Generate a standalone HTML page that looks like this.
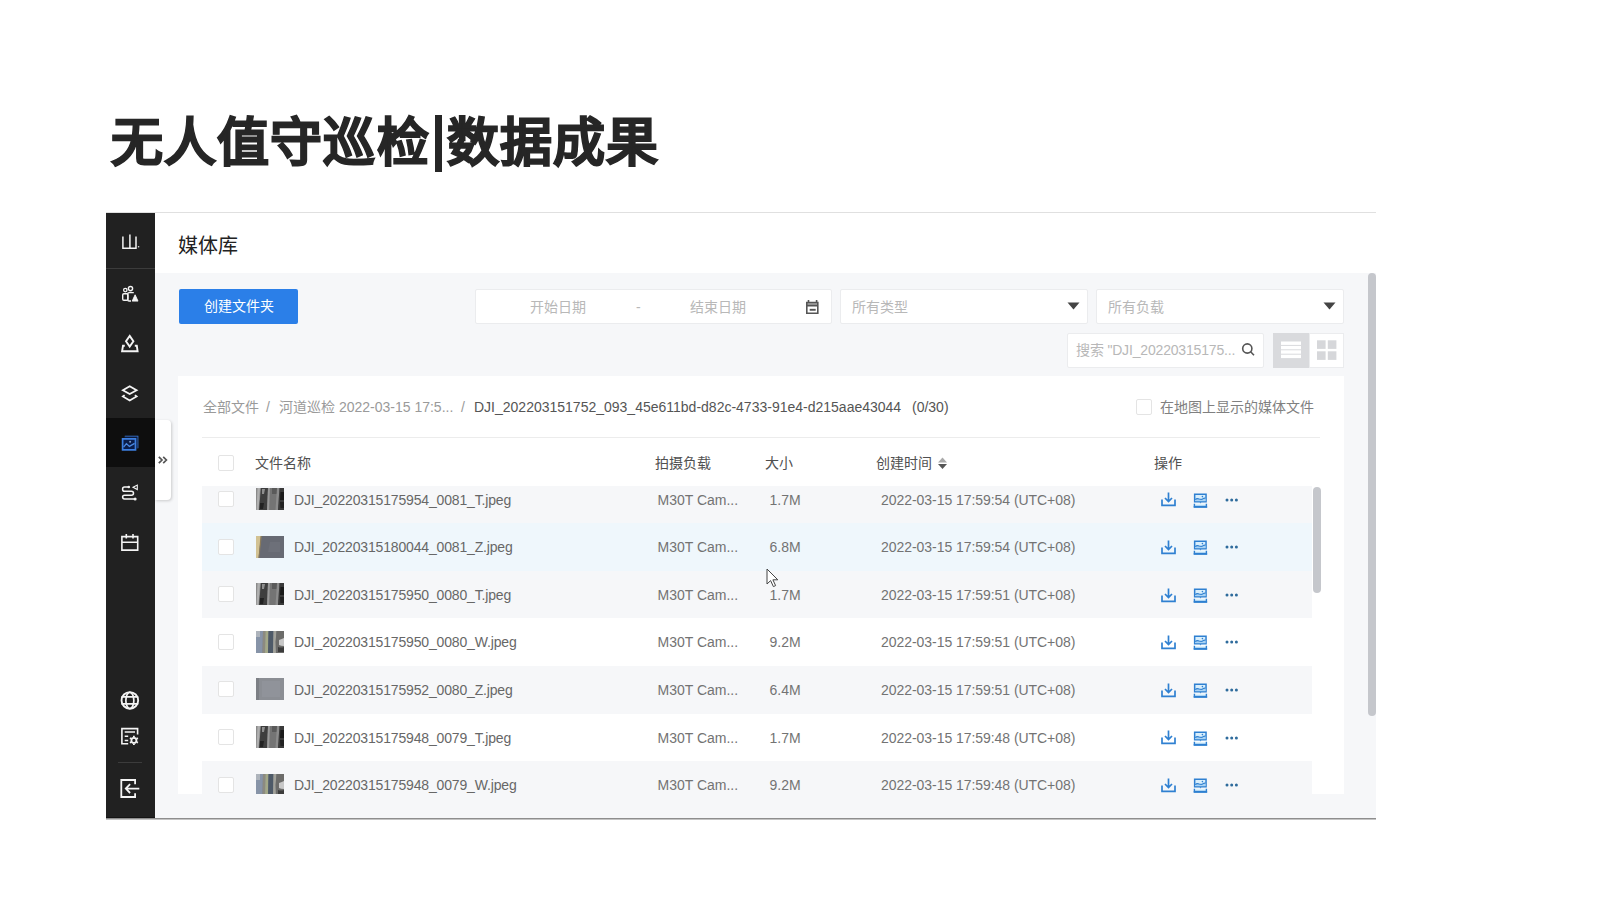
<!DOCTYPE html>
<html lang="zh-CN">
<head>
<meta charset="utf-8">
<style>
*{box-sizing:border-box;margin:0;padding:0}
html,body{width:1600px;height:900px;overflow:hidden;background:#fff;font-family:"Liberation Sans",sans-serif}
.a{position:absolute;white-space:nowrap}
.t14{font-size:14px;line-height:16px}
.c6{color:#737373}
.fn{color:#676767}
.ph{color:#b8b8b8}
.box{position:absolute;background:#fff;border:1px solid #ebecee;border-radius:2px}
.cb{position:absolute;width:16px;height:16px;border:1px solid #e4e4e4;border-radius:2px;background:#fff}
svg.a{overflow:visible}
</style>
</head>
<body>
<div class="a" style="left:111.3px;top:106.5px;font-size:52px;font-weight:bold;line-height:72px;color:#262626;-webkit-text-stroke:1.4px #262626;letter-spacing:1.05px">无人值守巡检</div>
<div class="a" style="left:435px;top:115px;width:6.5px;height:57px;background:#262626"></div>
<div class="a" style="left:447.3px;top:106.5px;font-size:52px;font-weight:bold;line-height:72px;color:#262626;-webkit-text-stroke:1.4px #262626;letter-spacing:1.05px">数据成果</div>
<div class="a" style="left:106px;top:212px;width:1270px;height:1px;background:#e0e0e0"></div>
<!-- sidebar -->
<div class="a" style="left:106px;top:213px;width:49px;height:605px;background:#212121"></div>
<div class="a" style="left:106px;top:268px;width:49px;height:1px;background:#3c3c3c"></div>
<div class="a" style="left:106px;top:418px;width:49px;height:49px;background:#0e0e0e"></div>
<div class="a" style="left:118px;top:762px;width:24px;height:1px;background:#3c3c3c"></div>
<svg class="a" style="left:106px;top:213px" width="49" height="605" viewBox="106 213 49 605" fill="none" stroke="#f4f4f4" stroke-width="1.6">
 <path d="M122.9 236.5V248.2H136V236.5M129.9 234.5V248.2" stroke-width="1.5"/><circle cx="138.6" cy="246.8" r="0.8" fill="#ddd" stroke="none"/>
 <circle cx="125.3" cy="290.1" r="1.7" stroke-width="1.3"/><circle cx="130.5" cy="288.6" r="2.1" stroke-width="1.4"/>
 <rect x="122.7" y="293.7" width="5.2" height="6.6" rx="1.2" stroke-width="1.4"/>
 <path d="M133.8 292.6H129Q127.8 292.6 127.8 293.8V299.8Q127.8 301 129 301H131" stroke-width="1.4"/>
 <path d="M135.1 294.8L138 301.1H132.2Z" fill="#f4f4f4" stroke-width="0.9"/>
 <path d="M129.7 335.9L133.4 341.3L129.7 346.6L126 341.3Z" stroke-width="1.9"/><path d="M124.8 345.8H123L122.1 351.2H137.6L136.8 345.8H134.8" stroke-width="1.9"/>
 <path d="M129.7 386.2L136.6 390.2L129.7 394L122.9 390.2Z" stroke-width="1.8"/><path d="M124.6 395.1L122.9 396.4L129.7 400.5L136.6 396.4L134.9 395.1" stroke-width="1.8"/>
 <path d="M124.8 436.5H137.6V448.3" stroke="#3d7fe0" stroke-width="1.5"/><path d="M124.8 436.5H137.6V448.3H135.5V438.8H124.8Z" fill="#0c1a3a" stroke="none"/><path d="M122.6 438.8H135.5V449.8H122.6Z" fill="#0a1d4a" stroke="#3d7fe0" stroke-width="1.7"/><path d="M123.6 447.2L126.4 443.6L129.4 446.4L134.6 443.4" stroke="#4a88e0" stroke-width="1.3"/><circle cx="130.1" cy="441.8" r="1" fill="#7a9acc" stroke="none"/>
 <path d="M128.7 487.1H124.5Q122.6 487.1 122.6 489.2Q122.6 491.3 124.5 491.3H131.4Q133.5 491.3 133.5 493.3Q133.5 495.3 131.4 495.3H124.5Q122.6 495.3 122.6 497.1Q122.6 498.9 124.5 498.9H135" stroke-width="1.5"/><circle cx="128.8" cy="487" r="1.3" fill="#f4f4f4" stroke="none"/><circle cx="135.1" cy="499" r="1.5" fill="#f4f4f4" stroke="none"/><path d="M133 487.2L137.3 485.1V489.5Z" stroke-width="1.1"/>
 <path d="M121.9 536.6H137.7V550.1H121.9ZM121.9 542.2H137.7M126.3 534V538.6M133 534V538.6" stroke-width="1.6"/>
 <circle cx="129.85" cy="700.4" r="8.3" stroke-width="1.9"/><path d="M121.5 696.8H138.2M121.5 703.9H138.2" stroke-width="1.7"/><ellipse cx="129.85" cy="700.4" rx="4" ry="8.1" stroke-width="1.7"/>
 <path d="M128.2 743.7H121.9V728.6H137.6V734.6" stroke-width="1.6"/><path d="M124.7 732.1H135M124.7 736.3H128.2M124.7 740.4H128.2" stroke-width="1.5"/>
 <circle cx="133.9" cy="740.4" r="2.5" stroke-width="1.8"/><path d="M133.9 735.8V737.2M133.9 743.6V745M129.9 738.1L131.1 738.8M136.7 742L137.9 742.7M129.9 742.7L131.1 742M136.7 738.8L137.9 738.1" stroke-width="1.8"/>
 <path d="M135.1 784.2V780H121.3V797H135.1V793.3" stroke-width="1.8"/><path d="M139.3 788.6H126M130.1 784.2L125.8 788.6L130.1 793" stroke-width="1.8"/>
</svg>
<!-- header -->
<div class="a" style="left:155px;top:213px;width:1221px;height:60px;background:#fff"></div>
<div class="a" style="left:178px;top:234px;font-size:20px;line-height:24px;color:#222">媒体库</div>
<!-- content bg -->
<div class="a" style="left:155px;top:273px;width:1221px;height:545px;background:#f6f7f9"></div>
<div class="a" style="left:1368px;top:273px;width:8px;height:443px;background:#c5c7cc;border-radius:4px"></div>
<div class="a" style="left:106px;top:818px;width:1270px;height:1px;background:#8e8e8e"></div><div class="a" style="left:106px;top:819px;width:1270px;height:1px;background:#c4c4c4"></div><div class="a" style="left:106px;top:817px;width:49px;height:1px;background:#141414"></div>
<!-- toolbar -->
<div class="a t14" style="left:179px;top:289px;width:119px;height:35px;background:#2b7fe8;border-radius:2px;color:#fff;text-align:center;line-height:35px">创建文件夹</div>
<div class="box" style="left:475px;top:289px;width:357px;height:35px"></div>
<div class="a t14 ph" style="left:530px;top:299px">开始日期</div>
<div class="a t14 ph" style="left:636px;top:299px">-</div>
<div class="a t14 ph" style="left:690px;top:299px">结束日期</div>
<svg class="a" style="left:805px;top:299px" width="15" height="16" viewBox="0 0 15 16" fill="none" stroke="#555" stroke-width="1.6"><path d="M1.8 3.9H12.8V6.4H1.8Z" fill="#a8a8a8" stroke="none"/><path d="M1.8 3.5H12.8V14.2H1.8ZM1.8 6.6H12.8"/><path d="M3.5 1V4M11.6 1V4"/><path d="M4.7 10.8H10.7" stroke-width="1.9"/></svg>
<div class="box" style="left:840px;top:289px;width:248px;height:35px"></div>
<div class="a t14 ph" style="left:852px;top:299px">所有类型</div>
<svg class="a" style="left:1067px;top:302px" width="13" height="8" viewBox="0 0 13 8"><path d="M0.5 0.5H12.5L6.5 7.5Z" fill="#444"/></svg>
<div class="box" style="left:1096px;top:289px;width:248px;height:35px"></div>
<div class="a t14 ph" style="left:1108px;top:299px">所有负载</div>
<svg class="a" style="left:1323px;top:302px" width="13" height="8" viewBox="0 0 13 8"><path d="M0.5 0.5H12.5L6.5 7.5Z" fill="#444"/></svg>
<div class="box" style="left:1067px;top:333px;width:197px;height:35px"></div>
<div class="a t14 ph" style="left:1076px;top:342px;letter-spacing:-0.17px">搜索 "DJI_20220315175...</div>
<svg class="a" style="left:1241px;top:342px" width="15" height="15" viewBox="0 0 15 15" fill="none" stroke="#555" stroke-width="1.6"><circle cx="6.3" cy="6.5" r="4.6"/><path d="M9.6 9.8L13 13.2"/></svg>
<div class="a" style="left:1273px;top:333px;width:36px;height:35px;background:#d9dadd"></div>
<svg class="a" style="left:1273px;top:333px" width="36" height="35" viewBox="0 0 36 35" fill="#fff"><rect x="8" y="8.5" width="20" height="3.4"/><rect x="8" y="12.9" width="20" height="3.4"/><rect x="8" y="17.3" width="20" height="3.4"/><rect x="8" y="21.7" width="20" height="3.4"/></svg>
<div class="box" style="left:1309px;top:333px;width:35px;height:35px;border-radius:0"></div>
<svg class="a" style="left:1309px;top:333px" width="35" height="35" viewBox="0 0 35 35" fill="#d6d7da"><rect x="8" y="7.3" width="8.6" height="8.6"/><rect x="18.8" y="7.3" width="8.6" height="8.6"/><rect x="8" y="18.3" width="8.6" height="8.6"/><rect x="18.8" y="18.3" width="8.6" height="8.6"/></svg>
<!-- card -->
<div class="a" style="left:178px;top:376px;width:1166px;height:418px;background:#fff;overflow:hidden"></div>
<div class="a t14" style="left:203px;top:399px;color:#9a9a9a">全部文件</div>
<div class="a t14" style="left:266px;top:399px;color:#9a9a9a">/</div>
<div class="a t14" style="left:279px;top:399px;color:#9a9a9a">河道巡检 2022-03-15 17:5...</div>
<div class="a t14" style="left:461px;top:399px;color:#9a9a9a">/</div>
<div class="a t14" style="left:474px;top:399px;color:#555">DJI_202203151752_093_45e611bd-d82c-4733-91e4-d215aae43044</div>
<div class="a t14" style="left:912px;top:399px;color:#555">(0/30)</div>
<div class="cb" style="left:1136px;top:399px"></div>
<div class="a t14" style="left:1160px;top:399px;color:#808080">在地图上显示的媒体文件</div>
<div class="a" style="left:202px;top:437px;width:1118px;height:1px;background:#ececec"></div>
<div class="cb" style="left:218px;top:455px"></div>
<div class="a t14" style="left:254.5px;top:455px;color:#505050">文件名称</div>
<div class="a t14" style="left:654.5px;top:455px;color:#505050">拍摄负载</div>
<div class="a t14" style="left:765px;top:455px;color:#505050">大小</div>
<div class="a t14" style="left:875.8px;top:455px;color:#505050">创建时间</div>
<svg class="a" style="left:936.8px;top:457.2px" width="11" height="13" viewBox="0 0 11 13"><path d="M5.5 0.5L10 5.5H1Z" fill="#aaa"/><path d="M1 7H10L5.5 12Z" fill="#555"/></svg>
<div class="a t14" style="left:1153.5px;top:455px;color:#505050">操作</div>
<!-- rows clip -->
<div class="a" style="left:0;top:486px;width:1600px;height:308px;overflow:hidden">
<div class="a" style="left:0;top:-486px;width:1600px;height:900px">
<div class="a" style="left:202px;top:476px;width:1110px;height:47px;background:#f6f7f9"></div>
<div class="cb" style="left:218px;top:491px"></div>
<div class="a" style="left:256px;top:488px;width:28px;height:22px;filter:blur(0.4px)"><svg width="28" height="22" viewBox="0 0 28 22" style="display:block"><rect width="28" height="22" fill="#6f6f6f"/><path d="M0 0H5L3 22H0Z" fill="#8a8a8a"/><path d="M1.5 0H4L2.5 22H0.5Z" fill="#b0b0b0"/><path d="M5 0H12L11 22H3Z" fill="#3e3e3e"/><path d="M6 1H9L8 6H6Z" fill="#8e8e8e"/><path d="M4 15H8L7 21H4Z" fill="#222"/><path d="M12 0H14L13.5 22H11Z" fill="#9a9a9a"/><path d="M14 0H22L21 22H13.5Z" fill="#747474"/><path d="M16 0H22V6H16Z" fill="#5a5a5a"/><path d="M21 0H23.5L22 22H19.5Z" fill="#8c8c8c"/><path d="M23.5 0H28V22H22Z" fill="#3a3a3a"/><path d="M24.5 4H28V12H24Z" fill="#1a1a1a"/><path d="M24 14H28V20H24.5Z" fill="#222"/></svg></div>
<div class="a t14 fn" style="left:294px;top:492px;letter-spacing:-0.16px">DJI_20220315175954_0081_T.jpeg</div>
<div class="a t14 c6" style="left:657.5px;top:492px">M30T Cam...</div>
<div class="a t14 c6" style="left:769.5px;top:492px">1.7M</div>
<div class="a t14 c6" style="left:881px;top:492px;letter-spacing:-0.05px">2022-03-15 17:59:54 (UTC+08)</div>
<svg class="a" style="left:1160px;top:492.3px" width="18" height="16" viewBox="0 0 18 16"><path d="M8.5 0.5V9.5M5 6l3.5 3.6L12 6M2 7.5V13.3H15V7.5" fill="none" stroke="#2f80d1" stroke-width="1.7"/></svg>
<svg class="a" style="left:1192px;top:492.5px" width="17" height="16" viewBox="0 0 17 16"><path d="M2.65 1.15H14.05V8.85H2.65Z" fill="#d9effc" stroke="#2f80d1" stroke-width="1.5"/><path d="M3.2 8.2V6.6Q5 4.8 7.2 6Q9.5 7 11.2 5.6Q12.6 4.8 13.6 5.2V8.2Z" fill="#a9d3f4"/><path d="M3.2 6.6Q5 4.8 7.2 6Q9.5 7 11.2 5.6Q12.6 4.8 13.6 5.2" fill="none" stroke="#2f80d1" stroke-width="1.2"/><circle cx="10.4" cy="3.6" r="0.8" fill="#2f80d1"/><path d="M7.6 9.2H9.4L8.5 10.4Z" fill="#2f80d1"/><path d="M2.4 10.8V13.4H14.4V10.8" fill="#dff3fc" stroke="#2f80d1" stroke-width="1.4"/><path d="M1.6 14.1H15.2" stroke="#2f80d1" stroke-width="1.6"/></svg>
<svg class="a" style="left:1224px;top:496.6px" width="16" height="6" viewBox="0 0 16 6"><circle cx="3" cy="3" r="1.5" fill="#2e6b9c"/><circle cx="7.7" cy="3" r="1.5" fill="#2e6b9c"/><circle cx="12.4" cy="3" r="1.5" fill="#2e6b9c"/></svg>
<div class="a" style="left:202px;top:523px;width:1110px;height:48px;background:#eff7fc"></div>
<div class="cb" style="left:218px;top:539px"></div>
<div class="a" style="left:256px;top:536px;width:28px;height:22px;filter:blur(0.4px)"><svg width="28" height="22" viewBox="0 0 28 22" style="display:block"><rect width="28" height="22" fill="#6f727a"/><path d="M0 0H5L2.5 22H0Z" fill="#d2c293"/><path d="M4.5 0H6L3.5 22H2.5Z" fill="#8a7a5a"/><path d="M6 0H28V22H3.5Z" fill="#676a73"/><path d="M14 6H24V16H12Z" fill="#6d7079"/></svg></div>
<div class="a t14 fn" style="left:294px;top:539px;letter-spacing:-0.16px">DJI_20220315180044_0081_Z.jpeg</div>
<div class="a t14 c6" style="left:657.5px;top:539px">M30T Cam...</div>
<div class="a t14 c6" style="left:769.5px;top:539px">6.8M</div>
<div class="a t14 c6" style="left:881px;top:539px;letter-spacing:-0.05px">2022-03-15 17:59:54 (UTC+08)</div>
<svg class="a" style="left:1160px;top:539.9px" width="18" height="16" viewBox="0 0 18 16"><path d="M8.5 0.5V9.5M5 6l3.5 3.6L12 6M2 7.5V13.3H15V7.5" fill="none" stroke="#2f80d1" stroke-width="1.7"/></svg>
<svg class="a" style="left:1192px;top:540.1px" width="17" height="16" viewBox="0 0 17 16"><path d="M2.65 1.15H14.05V8.85H2.65Z" fill="#d9effc" stroke="#2f80d1" stroke-width="1.5"/><path d="M3.2 8.2V6.6Q5 4.8 7.2 6Q9.5 7 11.2 5.6Q12.6 4.8 13.6 5.2V8.2Z" fill="#a9d3f4"/><path d="M3.2 6.6Q5 4.8 7.2 6Q9.5 7 11.2 5.6Q12.6 4.8 13.6 5.2" fill="none" stroke="#2f80d1" stroke-width="1.2"/><circle cx="10.4" cy="3.6" r="0.8" fill="#2f80d1"/><path d="M7.6 9.2H9.4L8.5 10.4Z" fill="#2f80d1"/><path d="M2.4 10.8V13.4H14.4V10.8" fill="#dff3fc" stroke="#2f80d1" stroke-width="1.4"/><path d="M1.6 14.1H15.2" stroke="#2f80d1" stroke-width="1.6"/></svg>
<svg class="a" style="left:1224px;top:544.2px" width="16" height="6" viewBox="0 0 16 6"><circle cx="3" cy="3" r="1.5" fill="#2e6b9c"/><circle cx="7.7" cy="3" r="1.5" fill="#2e6b9c"/><circle cx="12.4" cy="3" r="1.5" fill="#2e6b9c"/></svg>
<div class="a" style="left:202px;top:571px;width:1110px;height:47px;background:#f6f7f9"></div>
<div class="cb" style="left:218px;top:586px"></div>
<div class="a" style="left:256px;top:583px;width:28px;height:22px;filter:blur(0.4px)"><svg width="28" height="22" viewBox="0 0 28 22" style="display:block"><rect width="28" height="22" fill="#6f6f6f"/><path d="M0 0H5L3 22H0Z" fill="#8a8a8a"/><path d="M1.5 0H4L2.5 22H0.5Z" fill="#b0b0b0"/><path d="M5 0H12L11 22H3Z" fill="#3e3e3e"/><path d="M6 1H9L8 6H6Z" fill="#8e8e8e"/><path d="M4 15H8L7 21H4Z" fill="#222"/><path d="M12 0H14L13.5 22H11Z" fill="#9a9a9a"/><path d="M14 0H22L21 22H13.5Z" fill="#747474"/><path d="M16 0H22V6H16Z" fill="#5a5a5a"/><path d="M21 0H23.5L22 22H19.5Z" fill="#8c8c8c"/><path d="M23.5 0H28V22H22Z" fill="#3a3a3a"/><path d="M24.5 4H28V12H24Z" fill="#1a1a1a"/><path d="M24 14H28V20H24.5Z" fill="#222"/></svg></div>
<div class="a t14 fn" style="left:294px;top:587px;letter-spacing:-0.16px">DJI_20220315175950_0080_T.jpeg</div>
<div class="a t14 c6" style="left:657.5px;top:587px">M30T Cam...</div>
<div class="a t14 c6" style="left:769.5px;top:587px">1.7M</div>
<div class="a t14 c6" style="left:881px;top:587px;letter-spacing:-0.05px">2022-03-15 17:59:51 (UTC+08)</div>
<svg class="a" style="left:1160px;top:587.5px" width="18" height="16" viewBox="0 0 18 16"><path d="M8.5 0.5V9.5M5 6l3.5 3.6L12 6M2 7.5V13.3H15V7.5" fill="none" stroke="#2f80d1" stroke-width="1.7"/></svg>
<svg class="a" style="left:1192px;top:587.7px" width="17" height="16" viewBox="0 0 17 16"><path d="M2.65 1.15H14.05V8.85H2.65Z" fill="#d9effc" stroke="#2f80d1" stroke-width="1.5"/><path d="M3.2 8.2V6.6Q5 4.8 7.2 6Q9.5 7 11.2 5.6Q12.6 4.8 13.6 5.2V8.2Z" fill="#a9d3f4"/><path d="M3.2 6.6Q5 4.8 7.2 6Q9.5 7 11.2 5.6Q12.6 4.8 13.6 5.2" fill="none" stroke="#2f80d1" stroke-width="1.2"/><circle cx="10.4" cy="3.6" r="0.8" fill="#2f80d1"/><path d="M7.6 9.2H9.4L8.5 10.4Z" fill="#2f80d1"/><path d="M2.4 10.8V13.4H14.4V10.8" fill="#dff3fc" stroke="#2f80d1" stroke-width="1.4"/><path d="M1.6 14.1H15.2" stroke="#2f80d1" stroke-width="1.6"/></svg>
<svg class="a" style="left:1224px;top:591.8px" width="16" height="6" viewBox="0 0 16 6"><circle cx="3" cy="3" r="1.5" fill="#2e6b9c"/><circle cx="7.7" cy="3" r="1.5" fill="#2e6b9c"/><circle cx="12.4" cy="3" r="1.5" fill="#2e6b9c"/></svg>
<div class="a" style="left:202px;top:618px;width:1110px;height:48px;background:#ffffff"></div>
<div class="cb" style="left:218px;top:634px"></div>
<div class="a" style="left:256px;top:631px;width:28px;height:22px;filter:blur(0.4px)"><svg width="28" height="22" viewBox="0 0 28 22" style="display:block"><rect width="28" height="22" fill="#7a7f88"/><path d="M0 0H7L6.5 22H0Z" fill="#8794a8"/><path d="M0 0H4V6H0Z" fill="#aeb4bc"/><path d="M7 0H9.5L9 22H6.5Z" fill="#8c8a80"/><path d="M9.5 0H12.5L12 22H9Z" fill="#a3a888"/><path d="M12.5 0H17.5L17 22H12Z" fill="#4e5a68"/><path d="M17.5 0H20.5Q19 11 20 22H17Z" fill="#a2a29a"/><path d="M20.5 0H28V22H20Q19 11 20.5 0Z" fill="#6c6c6a"/><path d="M23 9Q26 8 28 7V15Q25 15 23 14Z" fill="#c8c8c8"/><path d="M22 16Q25 17 28 16V21H22Z" fill="#3c3c3c"/></svg></div>
<div class="a t14 fn" style="left:294px;top:634px;letter-spacing:-0.16px">DJI_20220315175950_0080_W.jpeg</div>
<div class="a t14 c6" style="left:657.5px;top:634px">M30T Cam...</div>
<div class="a t14 c6" style="left:769.5px;top:634px">9.2M</div>
<div class="a t14 c6" style="left:881px;top:634px;letter-spacing:-0.05px">2022-03-15 17:59:51 (UTC+08)</div>
<svg class="a" style="left:1160px;top:635.1px" width="18" height="16" viewBox="0 0 18 16"><path d="M8.5 0.5V9.5M5 6l3.5 3.6L12 6M2 7.5V13.3H15V7.5" fill="none" stroke="#2f80d1" stroke-width="1.7"/></svg>
<svg class="a" style="left:1192px;top:635.3px" width="17" height="16" viewBox="0 0 17 16"><path d="M2.65 1.15H14.05V8.85H2.65Z" fill="#d9effc" stroke="#2f80d1" stroke-width="1.5"/><path d="M3.2 8.2V6.6Q5 4.8 7.2 6Q9.5 7 11.2 5.6Q12.6 4.8 13.6 5.2V8.2Z" fill="#a9d3f4"/><path d="M3.2 6.6Q5 4.8 7.2 6Q9.5 7 11.2 5.6Q12.6 4.8 13.6 5.2" fill="none" stroke="#2f80d1" stroke-width="1.2"/><circle cx="10.4" cy="3.6" r="0.8" fill="#2f80d1"/><path d="M7.6 9.2H9.4L8.5 10.4Z" fill="#2f80d1"/><path d="M2.4 10.8V13.4H14.4V10.8" fill="#dff3fc" stroke="#2f80d1" stroke-width="1.4"/><path d="M1.6 14.1H15.2" stroke="#2f80d1" stroke-width="1.6"/></svg>
<svg class="a" style="left:1224px;top:639.4px" width="16" height="6" viewBox="0 0 16 6"><circle cx="3" cy="3" r="1.5" fill="#2e6b9c"/><circle cx="7.7" cy="3" r="1.5" fill="#2e6b9c"/><circle cx="12.4" cy="3" r="1.5" fill="#2e6b9c"/></svg>
<div class="a" style="left:202px;top:666px;width:1110px;height:48px;background:#f6f7f9"></div>
<div class="cb" style="left:218px;top:681px"></div>
<div class="a" style="left:256px;top:678px;width:28px;height:22px;filter:blur(0.4px)"><svg width="28" height="22" viewBox="0 0 28 22" style="display:block"><rect width="28" height="22" fill="#8b8e94"/><path d="M0 0H3V22H0Z" fill="#7c7f85"/><path d="M6 3H24V19H6Z" fill="#90939a"/></svg></div>
<div class="a t14 fn" style="left:294px;top:682px;letter-spacing:-0.16px">DJI_20220315175952_0080_Z.jpeg</div>
<div class="a t14 c6" style="left:657.5px;top:682px">M30T Cam...</div>
<div class="a t14 c6" style="left:769.5px;top:682px">6.4M</div>
<div class="a t14 c6" style="left:881px;top:682px;letter-spacing:-0.05px">2022-03-15 17:59:51 (UTC+08)</div>
<svg class="a" style="left:1160px;top:682.7px" width="18" height="16" viewBox="0 0 18 16"><path d="M8.5 0.5V9.5M5 6l3.5 3.6L12 6M2 7.5V13.3H15V7.5" fill="none" stroke="#2f80d1" stroke-width="1.7"/></svg>
<svg class="a" style="left:1192px;top:682.9px" width="17" height="16" viewBox="0 0 17 16"><path d="M2.65 1.15H14.05V8.85H2.65Z" fill="#d9effc" stroke="#2f80d1" stroke-width="1.5"/><path d="M3.2 8.2V6.6Q5 4.8 7.2 6Q9.5 7 11.2 5.6Q12.6 4.8 13.6 5.2V8.2Z" fill="#a9d3f4"/><path d="M3.2 6.6Q5 4.8 7.2 6Q9.5 7 11.2 5.6Q12.6 4.8 13.6 5.2" fill="none" stroke="#2f80d1" stroke-width="1.2"/><circle cx="10.4" cy="3.6" r="0.8" fill="#2f80d1"/><path d="M7.6 9.2H9.4L8.5 10.4Z" fill="#2f80d1"/><path d="M2.4 10.8V13.4H14.4V10.8" fill="#dff3fc" stroke="#2f80d1" stroke-width="1.4"/><path d="M1.6 14.1H15.2" stroke="#2f80d1" stroke-width="1.6"/></svg>
<svg class="a" style="left:1224px;top:687.0px" width="16" height="6" viewBox="0 0 16 6"><circle cx="3" cy="3" r="1.5" fill="#2e6b9c"/><circle cx="7.7" cy="3" r="1.5" fill="#2e6b9c"/><circle cx="12.4" cy="3" r="1.5" fill="#2e6b9c"/></svg>
<div class="a" style="left:202px;top:714px;width:1110px;height:47px;background:#ffffff"></div>
<div class="cb" style="left:218px;top:729px"></div>
<div class="a" style="left:256px;top:726px;width:28px;height:22px;filter:blur(0.4px)"><svg width="28" height="22" viewBox="0 0 28 22" style="display:block"><rect width="28" height="22" fill="#6f6f6f"/><path d="M0 0H5L3 22H0Z" fill="#8a8a8a"/><path d="M1.5 0H4L2.5 22H0.5Z" fill="#b0b0b0"/><path d="M5 0H12L11 22H3Z" fill="#3e3e3e"/><path d="M6 1H9L8 6H6Z" fill="#8e8e8e"/><path d="M4 15H8L7 21H4Z" fill="#222"/><path d="M12 0H14L13.5 22H11Z" fill="#9a9a9a"/><path d="M14 0H22L21 22H13.5Z" fill="#747474"/><path d="M16 0H22V6H16Z" fill="#5a5a5a"/><path d="M21 0H23.5L22 22H19.5Z" fill="#8c8c8c"/><path d="M23.5 0H28V22H22Z" fill="#3a3a3a"/><path d="M24.5 4H28V12H24Z" fill="#1a1a1a"/><path d="M24 14H28V20H24.5Z" fill="#222"/></svg></div>
<div class="a t14 fn" style="left:294px;top:730px;letter-spacing:-0.16px">DJI_20220315175948_0079_T.jpeg</div>
<div class="a t14 c6" style="left:657.5px;top:730px">M30T Cam...</div>
<div class="a t14 c6" style="left:769.5px;top:730px">1.7M</div>
<div class="a t14 c6" style="left:881px;top:730px;letter-spacing:-0.05px">2022-03-15 17:59:48 (UTC+08)</div>
<svg class="a" style="left:1160px;top:730.3px" width="18" height="16" viewBox="0 0 18 16"><path d="M8.5 0.5V9.5M5 6l3.5 3.6L12 6M2 7.5V13.3H15V7.5" fill="none" stroke="#2f80d1" stroke-width="1.7"/></svg>
<svg class="a" style="left:1192px;top:730.5px" width="17" height="16" viewBox="0 0 17 16"><path d="M2.65 1.15H14.05V8.85H2.65Z" fill="#d9effc" stroke="#2f80d1" stroke-width="1.5"/><path d="M3.2 8.2V6.6Q5 4.8 7.2 6Q9.5 7 11.2 5.6Q12.6 4.8 13.6 5.2V8.2Z" fill="#a9d3f4"/><path d="M3.2 6.6Q5 4.8 7.2 6Q9.5 7 11.2 5.6Q12.6 4.8 13.6 5.2" fill="none" stroke="#2f80d1" stroke-width="1.2"/><circle cx="10.4" cy="3.6" r="0.8" fill="#2f80d1"/><path d="M7.6 9.2H9.4L8.5 10.4Z" fill="#2f80d1"/><path d="M2.4 10.8V13.4H14.4V10.8" fill="#dff3fc" stroke="#2f80d1" stroke-width="1.4"/><path d="M1.6 14.1H15.2" stroke="#2f80d1" stroke-width="1.6"/></svg>
<svg class="a" style="left:1224px;top:734.6px" width="16" height="6" viewBox="0 0 16 6"><circle cx="3" cy="3" r="1.5" fill="#2e6b9c"/><circle cx="7.7" cy="3" r="1.5" fill="#2e6b9c"/><circle cx="12.4" cy="3" r="1.5" fill="#2e6b9c"/></svg>
<div class="a" style="left:202px;top:761px;width:1110px;height:48px;background:#f6f7f9"></div>
<div class="cb" style="left:218px;top:777px"></div>
<div class="a" style="left:256px;top:774px;width:28px;height:22px;filter:blur(0.4px)"><svg width="28" height="22" viewBox="0 0 28 22" style="display:block"><rect width="28" height="22" fill="#7a7f88"/><path d="M0 0H7L6.5 22H0Z" fill="#8794a8"/><path d="M0 0H4V6H0Z" fill="#aeb4bc"/><path d="M7 0H9.5L9 22H6.5Z" fill="#8c8a80"/><path d="M9.5 0H12.5L12 22H9Z" fill="#a3a888"/><path d="M12.5 0H17.5L17 22H12Z" fill="#4e5a68"/><path d="M17.5 0H20.5Q19 11 20 22H17Z" fill="#a2a29a"/><path d="M20.5 0H28V22H20Q19 11 20.5 0Z" fill="#6c6c6a"/><path d="M23 9Q26 8 28 7V15Q25 15 23 14Z" fill="#c8c8c8"/><path d="M22 16Q25 17 28 16V21H22Z" fill="#3c3c3c"/></svg></div>
<div class="a t14 fn" style="left:294px;top:777px;letter-spacing:-0.16px">DJI_20220315175948_0079_W.jpeg</div>
<div class="a t14 c6" style="left:657.5px;top:777px">M30T Cam...</div>
<div class="a t14 c6" style="left:769.5px;top:777px">9.2M</div>
<div class="a t14 c6" style="left:881px;top:777px;letter-spacing:-0.05px">2022-03-15 17:59:48 (UTC+08)</div>
<svg class="a" style="left:1160px;top:777.9px" width="18" height="16" viewBox="0 0 18 16"><path d="M8.5 0.5V9.5M5 6l3.5 3.6L12 6M2 7.5V13.3H15V7.5" fill="none" stroke="#2f80d1" stroke-width="1.7"/></svg>
<svg class="a" style="left:1192px;top:778.1px" width="17" height="16" viewBox="0 0 17 16"><path d="M2.65 1.15H14.05V8.85H2.65Z" fill="#d9effc" stroke="#2f80d1" stroke-width="1.5"/><path d="M3.2 8.2V6.6Q5 4.8 7.2 6Q9.5 7 11.2 5.6Q12.6 4.8 13.6 5.2V8.2Z" fill="#a9d3f4"/><path d="M3.2 6.6Q5 4.8 7.2 6Q9.5 7 11.2 5.6Q12.6 4.8 13.6 5.2" fill="none" stroke="#2f80d1" stroke-width="1.2"/><circle cx="10.4" cy="3.6" r="0.8" fill="#2f80d1"/><path d="M7.6 9.2H9.4L8.5 10.4Z" fill="#2f80d1"/><path d="M2.4 10.8V13.4H14.4V10.8" fill="#dff3fc" stroke="#2f80d1" stroke-width="1.4"/><path d="M1.6 14.1H15.2" stroke="#2f80d1" stroke-width="1.6"/></svg>
<svg class="a" style="left:1224px;top:782.2px" width="16" height="6" viewBox="0 0 16 6"><circle cx="3" cy="3" r="1.5" fill="#2e6b9c"/><circle cx="7.7" cy="3" r="1.5" fill="#2e6b9c"/><circle cx="12.4" cy="3" r="1.5" fill="#2e6b9c"/></svg>
</div>
</div>
<div class="a" style="left:1313px;top:487px;width:8px;height:106px;background:#c5c7cc;border-radius:4px"></div>
<!-- collapse tab -->
<div class="a" style="left:155px;top:420px;width:16px;height:80px;background:#fff;border-radius:0 4px 4px 0;box-shadow:1px 1px 3px rgba(0,0,0,0.18)"></div>
<svg class="a" style="left:157px;top:455px" width="12" height="10" viewBox="0 0 12 10" fill="none" stroke="#555" stroke-width="1.7"><path d="M1.8 1.8L5 5L1.8 8.2M6.2 1.8L9.4 5L6.2 8.2"/></svg>
<!-- cursor -->
<svg class="a" style="left:766px;top:568px" width="14" height="20" viewBox="0 0 14 20"><path d="M1 1V16L4.6 12.6L7.4 18.6L9.6 17.6L6.9 11.8H11.8Z" fill="#fff" stroke="#444" stroke-width="1"/></svg>
</body>
</html>
